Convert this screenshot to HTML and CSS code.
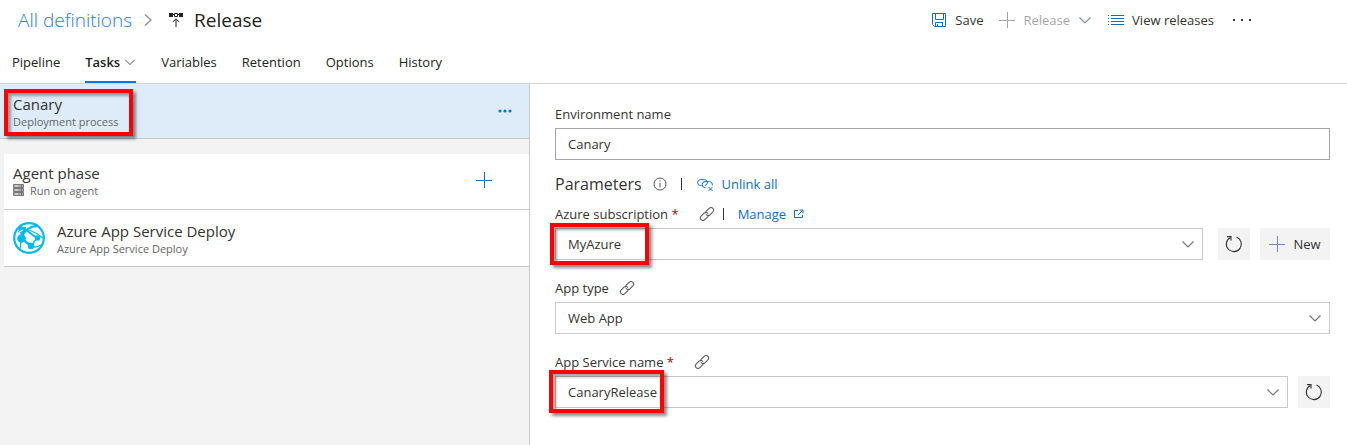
FILE: index.html
```html
<!DOCTYPE html>
<html lang="en">
<head>
<meta charset="utf-8">
<title>Release - Tasks</title>
<link rel="stylesheet" href="styles.css">
</head>
<body>
<svg class="symbols" aria-hidden="true">
  <symbol id="chevron" viewBox="0 0 14 14"><path d="M1.500 4.500 7 10l5.500-5.500" fill="none" stroke="currentColor" stroke-width="1.200"/></symbol>
  <symbol id="plus" viewBox="0 0 16 16"><path d="M0 8.500h16M8.500 0v16" fill="none" stroke="currentColor"/></symbol>
  <symbol id="link" viewBox="0 0 16 16"><g fill="none" stroke="currentColor" transform="rotate(-45 8 8)"><path d="M8.500 9.500a2.400 2.400 0 0 1-2 1H2.400a2.600 2.600 0 0 1 0-5.200h4.100a2.600 2.600 0 0 1 2.500 3.200"/><path d="M7.500 6.500a2.400 2.400 0 0 1 2-1h4.100a2.600 2.600 0 0 1 0 5.200H9.500A2.600 2.600 0 0 1 7 7.500"/></g></symbol>
  <symbol id="refresh" viewBox="0 0 18 18"><g fill="none" stroke="currentColor" stroke-width="1.100"><path d="M11.500 2.100A7.500 7.500 0 1 1 5.500 2.400"/><path d="M2 1.600h4v4"/></g></symbol>
</svg>

<header class="header">
  <div class="title-row">
    <nav class="breadcrumb" aria-label="Breadcrumb">
      <a class="crumb-link" href="#">All definitions</a>
      <svg class="crumb-arrow" viewBox="0 0 8 14"><path d="M1 1.500 7 7l-6 5.500" fill="none" stroke="currentColor" stroke-width="1.200"/></svg>
      <svg class="release-icon" viewBox="0 0 16 16"><path d="M1 1h4v4H1zM11 1h4v4h-4z" fill="currentColor"/><path d="M6.500 1.500h3v3h-3zM5 2.500h1M10 2.500h1M8 15V7M4.800 10 8 6.800l3.200 3.200" fill="none" stroke="currentColor"/></svg>
      <h1 class="title">Release</h1>
    </nav>
    <div class="toolbar">
      <button class="tool save" type="button">
        <svg class="icon-16 blue" viewBox="0 0 16 16"><path d="M1.500 1.500h13v13h-11l-2-2zM4.500 1.500v6h8v-6M4.500 14.500v-4h7v4M6.500 12v2.500" fill="none" stroke="currentColor"/></svg>
        <span>Save</span>
      </button>
      <button class="tool muted" type="button" disabled>
        <svg class="icon-16"><use href="#plus"/></svg>
        <span>Release</span>
        <svg class="icon-14 steel"><use href="#chevron"/></svg>
      </button>
      <button class="tool" type="button">
        <svg class="icon-16 blue" viewBox="0 0 16 16"><path d="M3 3.500h13M3 6.500h13M3 9.500h13M3 12.500h13M0 3.500h1M0 6.500h1M0 9.500h1M0 12.500h1" stroke="currentColor"/></svg>
        <span>View releases</span>
      </button>
      <button class="tool" type="button" aria-label="More actions">
        <svg class="more" viewBox="0 0 18 4"><path d="M0 1h2v2H0zM8 1h2v2H8zM16 1h2v2h-2z" fill="currentColor"/></svg>
      </button>
    </div>
  </div>
  <nav class="tabs" aria-label="Definition sections">
    <a class="tab" href="#">Pipeline</a>
    <a class="tab selected" href="#" aria-current="page">Tasks <svg class="tab-arrow"><use href="#chevron"/></svg></a>
    <a class="tab" href="#">Variables</a>
    <a class="tab" href="#">Retention</a>
    <a class="tab" href="#">Options</a>
    <a class="tab" href="#">History</a>
  </nav>
</header>

<main class="content">
  <section class="process">
    <div class="process-head">
      <div>
        <h2 class="item-title">Canary</h2>
        <p class="item-sub">Deployment process</p>
      </div>
      <button class="plain" type="button" aria-label="Process actions">
        <svg class="process-more" viewBox="0 0 14 4"><g fill="currentColor"><circle cx="2" cy="2" r="1.600"/><circle cx="7" cy="2" r="1.600"/><circle cx="12" cy="2" r="1.600"/></g></svg>
      </button>
      <span class="mark mark-process"></span>
    </div>
    <div class="phases">
      <div class="row phase">
        <div>
          <h2 class="item-title">Agent phase</h2>
          <p class="item-sub with-icon">
            <svg class="server" viewBox="0 0 11 12"><path d="M.5.5h10v3H.5zM.5 4.500h10v3H.5zM.5 8.500h10v3H.5z" fill="#aaa" stroke="#777"/><path d="M2 2h3M2 6h3M2 10h3" stroke="#eee"/><path d="M8 2h1M8 6h1M8 10h1" stroke="#444"/></svg>
            Run on agent
          </p>
        </div>
        <button class="plain add" type="button" aria-label="Add task">
          <svg class="icon-16"><use href="#plus"/></svg>
        </button>
      </div>
      <div class="row task">
        <svg class="app-icon" viewBox="0 0 32 32">
          <circle cx="16" cy="16" r="14.800" fill="#fff" stroke="#00b9f1" stroke-width="2.200"/>
          <g fill="none" stroke="#00b9f1">
            <path d="M8 16C11 9 17 4 25 4" stroke-width="1.800"/>
            <path d="M5 7c7-1 17 2 25 9" stroke-width="1.200"/>
            <path d="M10 6l14 10" stroke-width="2"/>
            <path d="M8 16l10 8" stroke-width="2.400"/>
            <path d="M24 16l-6 8M18 24c4 2 7 1 10-1M8 17l-1 10" stroke-width="1.300"/>
          </g>
          <path d="M7 4.500 13 5l-1 5-2 3-5-3z" fill="#00b9f1"/>
          <path d="M4 14c1-3 3-5 6-6" fill="none" stroke="#fff" stroke-width="1.200"/>
          <g fill="#00b9f1"><circle cx="8.500" cy="16.500" r="4.300"/><circle cx="24.500" cy="16" r="2.700"/><circle cx="18" cy="24" r="3.200"/></g>
        </svg>
        <div>
          <h2 class="item-title">Azure App Service Deploy</h2>
          <p class="item-sub">Azure App Service Deploy</p>
        </div>
      </div>
    </div>
  </section>

  <form class="details">
    <div class="label-row first"><label for="env">Environment name</label></div>
    <input class="field text-field" id="env" type="text" value="Canary">

    <div class="params">
      <h2 class="params-title">Parameters</h2>
      <svg class="info" viewBox="0 0 14 14"><circle cx="7" cy="7" r="6" fill="none" stroke="currentColor"/><path d="M7 6v4.500M7 3.500v1.200" stroke="currentColor"/></svg>
      <span class="bar"></span>
      <a class="action" href="#">
        <svg class="unlink" viewBox="0 0 18 16"><g fill="none" stroke="currentColor"><path d="M5.500 9.500h-1a2.900 2.900 0 0 1 0-5.800h4a2.900 2.900 0 0 1 2.400 4.500q-.8 1.200-2 1.200"/><path d="M9.500 11.500H9a2.900 2.900 0 0 1 0-5.800h4.500a2.900 2.900 0 0 1 2.700 3.800"/><path d="m12.500 11 4 4m0-4-4 4"/></g></svg>
        Unlink all
      </a>
    </div>

    <div class="label-row subscription">
      <label for="sub">Azure subscription <span class="required">*</span></label>
      <svg class="link-icon wide"><use href="#link"/></svg>
      <span class="bar"></span>
      <a class="action manage" href="#">Manage
        <svg class="external" viewBox="0 0 10 10"><path d="M4 1.500H.5v7h8V6M4 6l4.500-4.500M5.500 1H9v3.500" fill="none" stroke="currentColor"/></svg>
      </a>
    </div>
    <div class="control">
      <div class="select-wrap">
        <select class="field" id="sub"><option>MyAzure</option></select>
        <svg class="select-arrow"><use href="#chevron"/></svg>
        <span class="mark mark-sub"></span>
      </div>
      <button class="square after-wide" type="button" aria-label="Refresh subscriptions"><svg class="refresh"><use href="#refresh"/></svg></button>
      <button class="new" type="button"><svg class="icon-16 new-plus"><use href="#plus"/></svg>New</button>
    </div>

    <div class="label-row">
      <label for="type">App type</label>
      <svg class="link-icon"><use href="#link"/></svg>
    </div>
    <div class="control">
      <div class="select-wrap">
        <select class="field" id="type"><option>Web App</option></select>
        <svg class="select-arrow"><use href="#chevron"/></svg>
      </div>
    </div>

    <div class="label-row">
      <label for="service">App Service name <span class="required">*</span></label>
      <svg class="link-icon wide"><use href="#link"/></svg>
    </div>
    <div class="control">
      <div class="select-wrap">
        <select class="field" id="service"><option>CanaryRelease</option></select>
        <svg class="select-arrow"><use href="#chevron"/></svg>
        <span class="mark mark-service"></span>
      </div>
      <button class="square" type="button" aria-label="Refresh services"><svg class="refresh"><use href="#refresh"/></svg></button>
    </div>
  </form>
</main>
</body>
</html>
```

FILE: styles.css
```css
* { box-sizing: border-box; }

body {
  margin: 0;
  min-height: 100vh;
  display: flex;
  flex-direction: column;
  background: #fff;
  color: #333;
  font-family: "Open Sans", "Noto Sans", sans-serif;
  font-size: 13px;
  line-height: 20px;
}

h1, h2, p { margin: 0; font-weight: 400; }
a { color: #106ebe; text-decoration: none; }
svg { display: block; flex: none; }
button { font: inherit; color: inherit; cursor: pointer; }
.symbols { position: absolute; width: 0; height: 0; }

.icon-16 { width: 16px; height: 16px; }
.icon-14 { width: 14px; height: 14px; }
.blue { color: #106ebe; }
.steel { color: #8094a8; }

/* Header */
.header { border-bottom: 1px solid #d4d4d4; }
.title-row {
  display: flex;
  align-items: center;
  justify-content: space-between;
  height: 40px;
  padding: 0 96px 0 18px;
}
.breadcrumb { display: flex; align-items: center; }
.crumb-link, .title { font-size: 19px; line-height: 24px; }
.crumb-link { color: #2b7cd3; font-weight: 300; }
.title { color: #222; }
.crumb-arrow { width: 8px; height: 14px; margin: 0 16px 0 12px; color: #888; }
.release-icon { width: 16px; height: 16px; margin-right: 10px; color: #222; }

.toolbar { display: flex; align-items: center; gap: 16px; }
.tool {
  display: flex;
  align-items: center;
  gap: 8px;
  padding: 0;
  border: 0;
  background: none;
}
.tool.muted { color: #a6a6a6; }
.more { width: 18px; height: 4px; margin-left: 3px; }

.tabs { display: flex; gap: 25px; height: 43px; padding: 3px 12px 0; }
.tab {
  display: flex;
  align-items: center;
  gap: 4px;
  color: #222;
  border-bottom: 2px solid transparent;
}
.tab.selected { font-weight: 600; border-color: #0078d7; }
.tab-arrow { width: 12px; height: 12px; color: #888; }

/* Process tree */
.content {
  flex: 1;
  display: grid;
  grid-template-columns: 530fr 817fr;
}
.process { background: #f3f3f3; border-right: 1px solid #c8c8c8; }
.process-head, .row {
  display: flex;
  align-items: center;
  border-bottom: 1px solid #c8c8c8;
}
.process-head {
  position: relative;
  justify-content: space-between;
  height: 55px;
  padding: 0 17px 0 13px;
  background: #deecf9;
}
.item-title { font-size: 15px; line-height: 20px; }
.item-sub { color: #666; font-size: 11px; line-height: 15px; }
.with-icon { display: flex; gap: 6px; align-items: center; }
.plain { padding: 0; border: 0; background: none; color: #0078d7; }
.process-more { width: 14px; height: 4px; }
.phases { margin: 15px 0 0 4px; }
.row { background: #fff; padding: 0 9px; }
.phase { justify-content: space-between; height: 56px; padding: 0 37px 3px 9px; }
.task { height: 57px; gap: 12px; }
.server { width: 11px; height: 12px; }
.app-icon { width: 32px; height: 32px; }

/* Details form */
.details { padding: 20px 17px 20px 25px; min-width: 0; }
.label-row {
  display: flex;
  align-items: center;
  height: 20px;
  margin: 18px 0 4px;
}
.label-row.first { margin-top: 0; }
.label-row.subscription { margin-top: 8px; }
.required { color: #a80000; }

.field {
  display: block;
  width: 100%;
  height: 32px;
  padding: 0 12px;
  border: 1px solid #c8c8c8;
  border-radius: 0;
  background: #fff;
  color: #333;
  font: inherit;
  appearance: none;
}
.text-field { border-color: #a6a6a6; }

.params { display: flex; align-items: center; height: 24px; margin-top: 12px; }
.params-title { font-size: 16px; line-height: 24px; }
.info { width: 14px; height: 14px; margin: 0 14px 0 11px; color: #555; }
.bar { width: 1px; height: 12px; background: #333; }
.action { display: flex; align-items: center; gap: 8px; margin-left: 14px; }
.action.manage { margin-left: 14px; }
.unlink { width: 18px; height: 16px; }
.external { width: 10px; height: 10px; }
.link-icon { width: 16px; height: 16px; margin: 0 8px 0 10px; color: #555; }
.link-icon.wide { margin-left: 20px; }

.control { display: flex; gap: 10px; }
.select-wrap { position: relative; flex: 1; min-width: 0; }
.select-arrow {
  position: absolute;
  top: 9px;
  right: 8px;
  width: 14px;
  height: 14px;
  color: #777;
  pointer-events: none;
}
.square, .new {
  display: flex;
  align-items: center;
  justify-content: center;
  height: 32px;
  padding: 0;
  border: 0;
  background: #f3f3f3;
}
.square { width: 32px; }
.after-wide { margin-left: 5px; }
.new { width: 70px; gap: 8px; }
.new-plus { color: #7088c4; }
.refresh { width: 18px; height: 18px; }

/* Highlight frames */
.mark {
  position: absolute;
  border: 4px solid #f00;
  box-shadow: 3px 3px 3px rgba(0, 0, 0, .45), inset 3px 3px 3px rgba(0, 0, 0, .35);
  pointer-events: none;
}
.mark-process { left: 4px; top: 5px; width: 129px; height: 47px; }
.mark-sub { left: -5px; top: -5px; width: 99px; height: 42px; }
.mark-service { left: -6px; top: -6px; width: 115px; height: 43px; }
```
